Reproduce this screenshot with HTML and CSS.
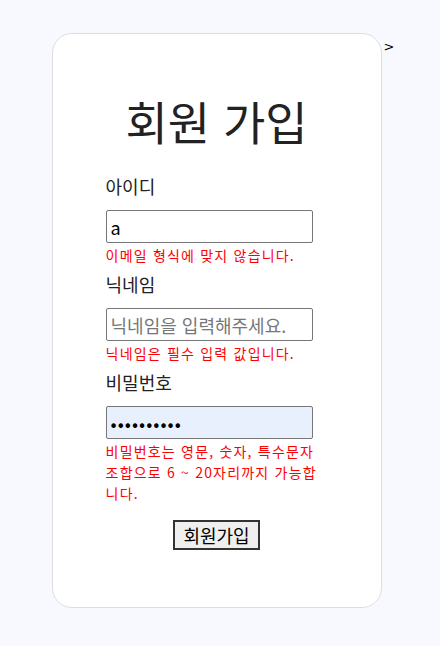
FILE: index.html
```html
<!DOCTYPE html>
<html lang="ko">
<head>
<meta charset="utf-8">
<title>회원 가입</title>
<link rel="stylesheet" href="styles.css">
</head>
<body>
<div class="page">
  <div class="card">
    <h1 class="title">회원 가입</h1>
    <form class="form">
      <div class="fields">
        <div class="field">
          <label class="label" for="uid">아이디</label>
          <input class="input" id="uid" type="text" value="a">
          <p class="error">이메일 형식에 맞지 않습니다.</p>
        </div>
        <div class="field">
          <label class="label" for="nick">닉네임</label>
          <input class="input" id="nick" type="text" placeholder="닉네임을 입력해주세요.">
          <p class="error">닉네임은 필수 입력 값입니다.</p>
        </div>
        <div class="field">
          <label class="label" for="pw">비밀번호</label>
          <input class="input input-filled" id="pw" type="password" value="aaaaaaaaaa">
          <p class="error">비밀번호는 영문, 숫자, 특수문자 조합으로 6 ~ 20자리까지 가능합니다.</p>
        </div>
      </div>
      <div class="actions">
        <button class="submit" type="button">회원가입</button>
      </div>
    </form>
  </div>
  <span class="stray">&gt;</span>
</div>
</body>
</html>
```
FILE: styles.css
```css
html, body {
  margin: 0;
  padding: 0;
  background: #f8f9ff;
  font-family: "Noto Sans CJK KR", "Noto Sans", sans-serif;
  color: #222;
}

.page {
  display: flex;
  justify-content: center;
  align-items: flex-start;
  padding-top: 33px;
  padding-left: 6px;
}

.card {
  width: 328px;
  height: 573px;
  background: #fff;
  border: 1px solid #dedede;
  border-radius: 20px;
}

.title {
  margin: 56px 0 0;
  font-size: 46px;
  line-height: 60px;
  font-weight: 400;
  text-align: center;
  color: #222;
}

.form {
  margin: 23px 0 0;
}

.fields {
  margin-left: 53px;
  width: 216px;
  display: flex;
  flex-direction: column;
  gap: 5px;
}

.field {
  display: flex;
  flex-direction: column;
  align-items: flex-start;
}

.label {
  font-size: 18px;
  line-height: 26px;
  margin-bottom: 11px;
  color: #222;
}

.input {
  box-sizing: border-box;
  width: 207px;
  height: 33px;
  margin: 0;
  padding: 1px 4px;
  border: 1px solid #767676;
  border-radius: 2px;
  background: #fff;
  font-family: "Noto Sans CJK KR", "Liberation Sans", sans-serif;
  font-size: 18px;
  color: #000;
}

.input::placeholder {
  color: #777;
}

.input-filled {
  background: #e8f0fe;
  letter-spacing: 1px;
}

.error {
  margin: 2px 0 0;
  font-size: 14px;
  line-height: 21px;
  letter-spacing: 1.2px;
  color: #ff0000;
}

.actions {
  margin-top: 16px;
  text-align: center;
}

.submit {
  box-sizing: border-box;
  height: 30px;
  padding: 0 8px;
  border: 2px solid #333;
  background: #efefef;
  font-family: "Noto Sans CJK KR", sans-serif;
  font-size: 18px;
  line-height: 24px;
  color: #000;
  border-radius: 0;
}

.stray {
  margin-top: 6px;
  margin-left: 2px;
  font-family: "DejaVu Sans", sans-serif;
  font-size: 13px;
  line-height: 16px;
  color: #000;
}
```
